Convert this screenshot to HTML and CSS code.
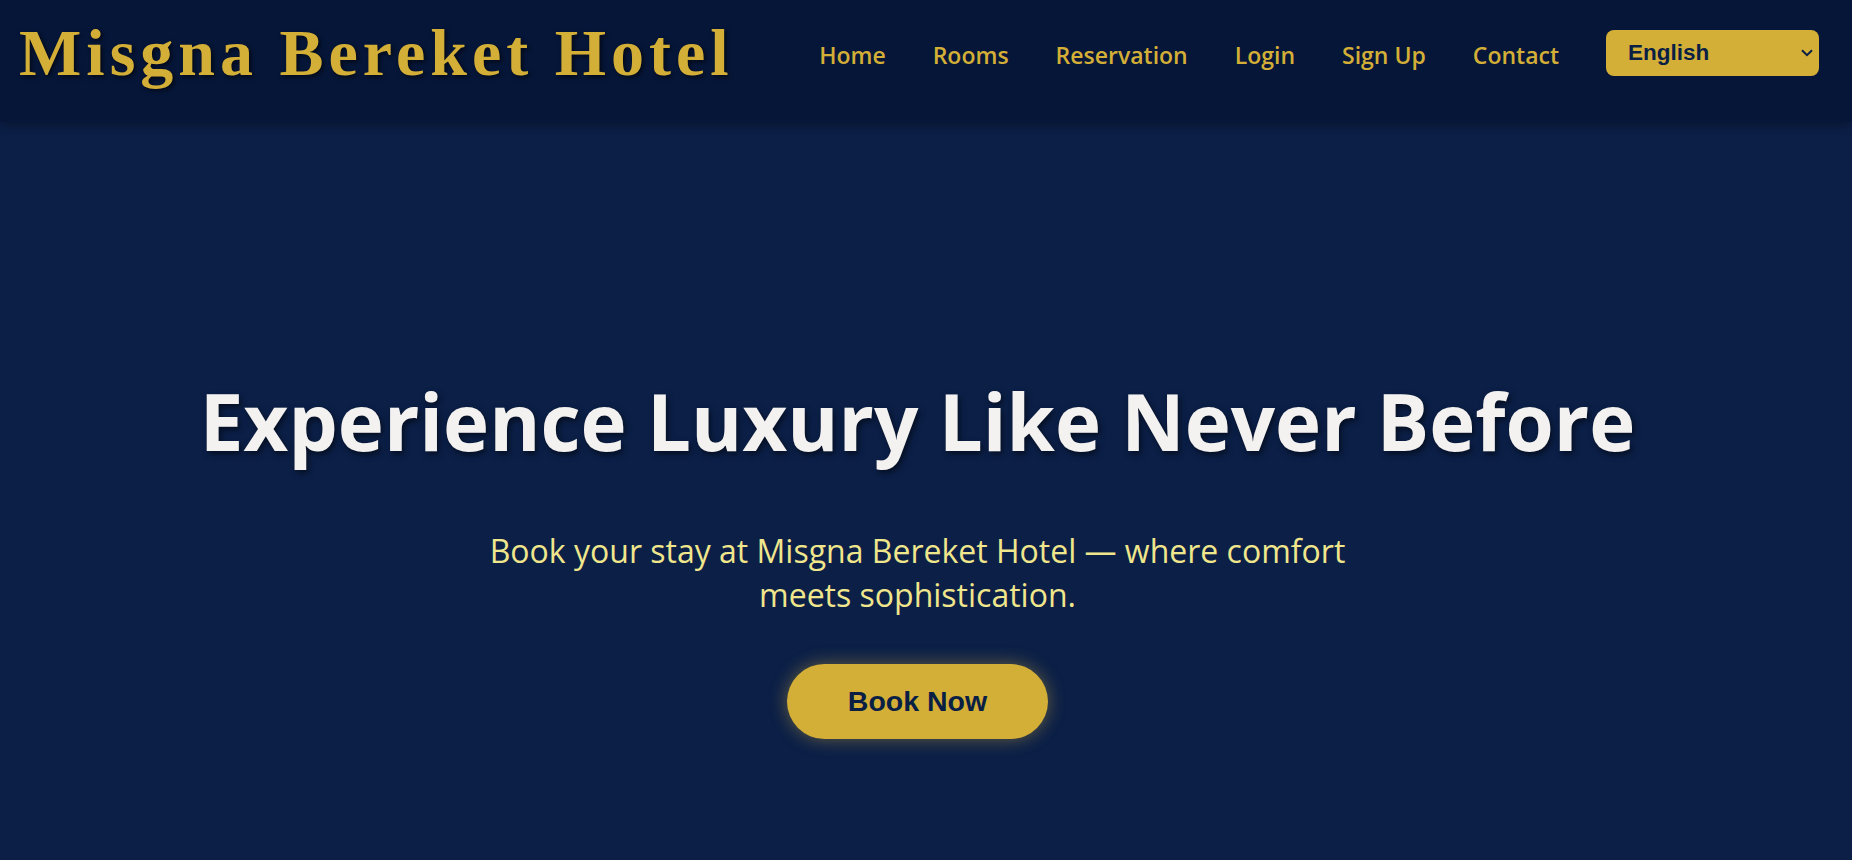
FILE: index.html
```html
<!DOCTYPE html>
<html lang="en">
<head>
<meta charset="utf-8">
<title>Misgna Bereket Hotel</title>
<link rel="stylesheet" href="styles.css">
</head>
<body>
<header class="site-header">
  <h1 class="brand">Misgna Bereket Hotel</h1>
  <nav class="main-nav">
    <ul class="nav-list">
      <li><a href="#" class="nav-link">Home</a></li>
      <li><a href="#" class="nav-link">Rooms</a></li>
      <li><a href="#" class="nav-link">Reservation</a></li>
      <li><a href="#" class="nav-link">Login</a></li>
      <li><a href="#" class="nav-link">Sign Up</a></li>
      <li><a href="#" class="nav-link">Contact</a></li>
    </ul>
    <div class="lang-wrap">
      <select class="lang-select">
        <option>English</option>
        <option>Amharic</option>
      </select>
      <svg class="lang-chevron" width="12" height="8" viewBox="0 0 12 8" aria-hidden="true"><path d="M1 1.2 L6 6.2 L11 1.2" fill="none" stroke="#0a1f44" stroke-width="2"/></svg>
    </div>
  </nav>
</header>
<main class="hero">
  <h2 class="hero-title">Experience Luxury Like Never Before</h2>
  <p class="hero-text">Book your stay at Misgna Bereket Hotel — where comfort meets sophistication.</p>
  <a href="#" class="book-btn">Book Now</a>
</main>
</body>
</html>
```
FILE: styles.css
```css
* { box-sizing: border-box; }
html, body { margin: 0; padding: 0; }
body {
  background: #0b1f47;
  min-height: 860px;
  font-family: "Open Sans", "Noto Sans", sans-serif;
  overflow: hidden;
}
.site-header {
  display: flex;
  align-items: center;
  justify-content: space-between;
  padding: 15px 33px 31px 19px;
  background: #061638;
  box-shadow: 0 4px 10px rgba(0, 0, 0, 0.3);
  position: relative;
  z-index: 1;
}
.brand {
  margin: 0;
  font-family: "Liberation Serif", "Times New Roman", serif;
  font-weight: 700;
  font-size: 66px;
  letter-spacing: 5px;
  color: #d4af37;
  text-shadow: 2px 2px 4px rgba(0, 0, 0, 0.6);
  line-height: normal;
  white-space: nowrap;
}
.main-nav {
  display: flex;
  align-items: center;
  gap: 47px;
}
.nav-list {
  display: flex;
  gap: 47px;
  list-style: none;
  margin: 0;
  padding: 0;
}
.nav-link {
  color: #d4af37;
  text-decoration: none;
  font-size: 23px;
  font-weight: 600;
  display: block;
  padding-top: 3px;
}
.lang-wrap {
  position: relative;
}
.lang-select {
  appearance: none;
  -webkit-appearance: none;
  display: block;
  width: 213px;
  height: 46px;
  border: none;
  border-radius: 8px;
  background: #d4af37;
  color: #0a1f44;
  font-family: "Liberation Sans", Arial, sans-serif;
  font-weight: 700;
  font-size: 22.5px;
  padding: 0 0 2px 22px;
}
.lang-chevron {
  position: absolute;
  right: 6px;
  top: 19px;
  pointer-events: none;
}
.hero {
  display: flex;
  flex-direction: column;
  align-items: center;
  text-align: center;
  padding: 253px 17px 0 0;
}
.hero-title {
  margin: 0;
  font-family: "Open Sans", "Noto Sans", sans-serif;
  font-weight: 700;
  font-size: 78px;
  letter-spacing: 0;
  color: #f4f2f0;
  text-shadow: 2px 3px 6px rgba(0, 0, 0, 0.55);
  line-height: 1.2;
}
.hero-text {
  margin: 60px 0 0;
  max-width: 900px;
  font-size: 32px;
  line-height: 44px;
  color: #f0e68c;
}
.book-btn {
  margin-top: 47px;
  display: inline-block;
  padding: 21px 61px;
  border-radius: 40px;
  background: #d4af37;
  color: #0a1f44;
  font-family: "Liberation Sans", Arial, sans-serif;
  font-weight: 700;
  font-size: 28.5px;
  text-decoration: none;
  box-shadow: 0 0 18px rgba(212, 175, 55, 0.45);
}
```
